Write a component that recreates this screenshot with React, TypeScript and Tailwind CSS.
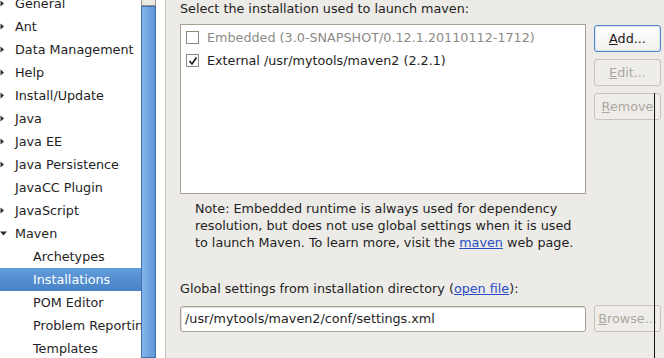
import React from "react";

const font = { fontFamily: '"DejaVu Sans", Verdana, sans-serif' };

type Item = { label: string; level: 0 | 1; arrow?: "right" | "down"; selected?: boolean };

const items: Item[] = [
  { label: "General", level: 0, arrow: "right" },
  { label: "Ant", level: 0, arrow: "right" },
  { label: "Data Management", level: 0, arrow: "right" },
  { label: "Help", level: 0, arrow: "right" },
  { label: "Install/Update", level: 0, arrow: "right" },
  { label: "Java", level: 0, arrow: "right" },
  { label: "Java EE", level: 0, arrow: "right" },
  { label: "Java Persistence", level: 0, arrow: "right" },
  { label: "JavaCC Plugin", level: 0 },
  { label: "JavaScript", level: 0, arrow: "right" },
  { label: "Maven", level: 0, arrow: "down" },
  { label: "Archetypes", level: 1 },
  { label: "Installations", level: 1, selected: true },
  { label: "POM Editor", level: 1 },
  { label: "Problem Reporting", level: 1 },
  { label: "Templates", level: 1 },
];

function Arrow({ dir }: { dir: "right" | "down" }) {
  if (dir === "right")
    return (
      <svg width="5" height="7" viewBox="0 0 5 7" className="absolute left-0 top-[8px]">
        <path d="M0.5 0.5 L4 3.5 L0.5 6.5 Z" fill="#2e2e2e" />
      </svg>
    );
  return (
    <svg width="7" height="5" viewBox="0 0 7 5" className="absolute left-0 top-[9px]">
      <path d="M0 0.5 L7 0.5 L3.5 4.5 Z" fill="#2e2e2e" />
    </svg>
  );
}

function Checkbox({ checked }: { checked?: boolean }) {
  return (
    <div className="w-[13px] h-[13px] border border-[#8f8a80] bg-white flex items-center justify-center shrink-0">
      {checked && (
        <svg width="10" height="10" viewBox="0 0 10 10">
          <path d="M1.5 5 L4 8 L8.5 1.5" stroke="#1a1a1a" strokeWidth="1.6" fill="none" />
        </svg>
      )}
    </div>
  );
}

function Btn({ children, focused, disabled, className = "" }: { children: React.ReactNode; focused?: boolean; disabled?: boolean; className?: string }) {
  return (
    <div
      className={
        "w-[67px] h-[27px] rounded-[3px] flex items-center justify-center " +
        (focused
          ? "border border-[#4f86cc] bg-gradient-to-b from-white to-[#f2f1ee] text-[#1a1a1a] shadow-[inset_0_0_0_1px_#d8e6f6] "
          : disabled
          ? "border border-[#c9c3b8] bg-[#efede9] text-[#aca79f] "
          : "") +
        className
      }
    >
      {children}
    </div>
  );
}

export default function App() {
  return (
    <div className="w-[664px] h-[358px] overflow-hidden flex bg-[#edebe7] text-[12.75px] text-[#1e1e1e] relative" style={font}>
      {/* Left tree */}
      <div className="flex h-full shrink-0">
        <div className="w-[141px] h-full bg-white overflow-hidden">
          <div className="mt-[-8px]">
            {items.map((it) => (
              <div
                key={it.label}
                className={
                  "relative h-[23px] flex items-center whitespace-nowrap " +
                  (it.selected ? "bg-gradient-to-b from-[#629cdc] to-[#4883c6] text-white" : "")
                }
              >
                {it.arrow && <Arrow dir={it.arrow} />}
                <span className={it.level === 0 ? "pl-[15px]" : "pl-[33px]"}>{it.label}</span>
              </div>
            ))}
          </div>
        </div>
        <div className="w-[15px] h-full flex flex-col bg-[#e6e3de]">
          <div className="h-[6px] border-x border-b border-[#9c978e] bg-[#ece9e4]" />
          <div className="flex-1 border border-[#3f6fae] bg-gradient-to-r from-[#86b6ec] to-[#5f96d8]" />
        </div>
        <div className="w-[10px] h-full bg-white border-r border-[#c9c4bb]" />
      </div>

      {/* Right panel */}
      <div className="flex-1 pl-[14px] flex flex-col">
        <div className="h-[16px] leading-[16px] mt-[1px]">Select the installation used to launch maven:</div>
        <div className="flex mt-[7px]">
          <div className="w-[406px] h-[170px] border border-[#a8a295] bg-white pt-[1px]">
            <div className="h-[23px] flex items-center pl-[5px] gap-[8px] whitespace-nowrap">
              <Checkbox />
              <span className="text-[#8d8a85]">Embedded (3.0-SNAPSHOT/0.12.1.20110112-1712)</span>
            </div>
            <div className="h-[23px] flex items-center pl-[5px] gap-[8px] whitespace-nowrap">
              <Checkbox checked />
              <span>External /usr/mytools/maven2 (2.2.1)</span>
            </div>
          </div>
          <div className="ml-[8px] flex flex-col gap-[7px] pt-[1px]">
            <Btn focused>
              <span><span className="underline">A</span>dd...</span>
            </Btn>
            <Btn disabled>
              <span><span className="underline">E</span>dit...</span>
            </Btn>
            <Btn disabled>
              <span><span className="underline">R</span>emove</span>
            </Btn>
          </div>
        </div>
        <div className="pl-[15px] mt-[6px] leading-[17px]">
          Note: Embedded runtime is always used for dependency
          <br />
          resolution, but does not use global settings when it is used
          <br />
          to launch Maven. To learn more, visit the{" "}
          <span className="text-[#2a4cc4] underline">maven</span> web page.
        </div>
        <div className="mt-[30px] h-[16px] leading-[16px]">
          Global settings from installation directory (<span className="text-[#2a4cc4] underline">open file</span>):
        </div>
        <div className="flex mt-[8px] items-center">
          <div className="w-[406px] h-[26px] border border-[#a8a295] rounded-[3px] bg-white flex items-center pl-[4px] shadow-[inset_1px_1px_0_#e4e1dc]">
            /usr/mytools/maven2/conf/settings.xml
          </div>
          <Btn disabled className="ml-[8px]">
            <span><span className="underline">B</span>rowse...</span>
          </Btn>
        </div>
      </div>

      {/* Cursor line artifact */}
      <div className="absolute left-[654px] top-[93px] w-[1px] h-[265px] bg-[#111]" />
    </div>
  );
}
